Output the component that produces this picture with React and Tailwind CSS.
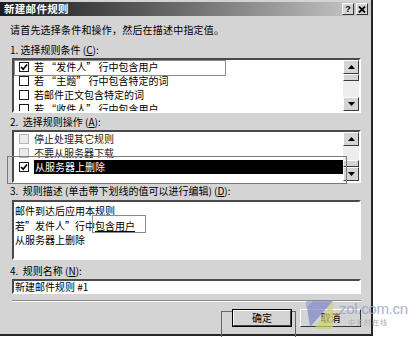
import React from 'react';

const Check = ({ checked, disabled }) => (
  <span
    className={`shrink-0 w-[10px] h-[10px] border flex items-center justify-center ${
      disabled ? 'border-[#b4b4b4] bg-[#ececec]' : 'border-[#1a1a1a] bg-white'
    }`}
  >
    {checked && (
      <svg viewBox="0 0 8 8" className="w-[8px] h-[8px]">
        <path d="M1 4 L3.2 6.2 L7 1.5" stroke="#000" strokeWidth="1.7" fill="none" />
      </svg>
    )}
  </span>
);

const ArrowBtn = ({ up }) => (
  <div className="h-[14px] w-full bg-[#d4d4d4] border border-t-white border-l-white border-b-[#3a3a3a] border-r-[#3a3a3a] flex items-center justify-center">
    <svg viewBox="0 0 7 4" className="w-[7px] h-[4px]">
      <path d={up ? 'M0 4 L3.5 0 L7 4 Z' : 'M0 0 L3.5 4 L7 0 Z'} fill="#000" />
    </svg>
  </div>
);

const Scrollbar = ({ thumbTop }) => (
  <div className="w-[16px] h-full flex flex-col bg-[#ededed]">
    <ArrowBtn up />
    <div className="flex-1 relative">
      <div
        className={`absolute left-0 w-full h-[7px] bg-[#d4d4d4] border border-t-white border-l-white border-b-[#3a3a3a] border-r-[#3a3a3a] ${
          thumbTop ? 'top-0' : 'bottom-0'
        }`}
      />
    </div>
    <ArrowBtn />
  </div>
);

const Row = ({ checked, disabled, selected, children }) => (
  <div className="h-[14px] flex items-center pl-[5px] gap-[5px] whitespace-nowrap">
    <Check checked={checked} disabled={disabled} />
    <span className={`leading-[14px] ${selected ? 'flex-1 bg-black text-white pl-[1px]' : ''}`}>{children}</span>
  </div>
);

const sunken = 'border-2 border-t-[#4a4a4a] border-l-[#4a4a4a] border-b-white border-r-white';

export default function App() {
  return (
    <div className="w-[416px] h-[337px] bg-white relative overflow-hidden font-['Noto_Sans_CJK_SC',sans-serif] text-[10px] text-black">
      <div className="w-[373px] h-[336px] bg-[#d4d4d4] border-r-2 border-b-2 border-r-[#262626] border-b-[#262626] flex flex-col">
        {/* title bar */}
        <div className="mt-[2px] h-[14px] bg-gradient-to-r from-[#1c1c1c] via-[#6e6e6e] to-[#cdcdcd] flex items-center pl-[4px] pr-[3px]">
          <span className="text-white font-bold text-[10.5px] leading-[14px] tracking-[0.3px]">新建邮件规则</span>
          <div className="ml-auto flex gap-[2px]">
            <div className="w-[12px] h-[12px] bg-[#d4d4d4] border border-t-white border-l-white border-b-[#333] border-r-[#333] flex items-center justify-center text-[9px] font-bold leading-none font-['Liberation_Sans',sans-serif]">?</div>
            <div className="w-[12px] h-[12px] bg-[#d4d4d4] border border-t-white border-l-white border-b-[#333] border-r-[#333] flex items-center justify-center">
              <svg viewBox="0 0 8 7" className="w-[8px] h-[7px]">
                <path d="M1 0.5 L7 6.5 M7 0.5 L1 6.5" stroke="#000" strokeWidth="1.8" />
              </svg>
            </div>
          </div>
        </div>

        <div className="px-[10px] flex flex-col">
          <div className="mt-[7px] h-[14px] leading-[14px] tracking-[0.2px]">请首先选择条件和操作，然后在描述中指定值。</div>

          <div className="mt-[6px] h-[14px] leading-[14px]">
            1. 选择规则条件 (<span className="underline">C</span>):
          </div>
          <div className={`mt-[1px] ml-[2px] h-[55px] bg-white ${sunken} flex relative`}>
            <div className="flex-1 overflow-hidden relative">
              <Row checked>若 “发件人” 行中包含用户</Row>
              <Row>若 “主题” 行中包含特定的词</Row>
              <Row>若邮件正文包含特定的词</Row>
              <Row>若 “收件人” 行中包含用户</Row>
              <div className="absolute left-0 top-0 w-[212px] h-[16px] border border-[#8a8a8a]" />
            </div>
            <Scrollbar thumbTop />
          </div>

          <div className="mt-[2px] h-[14px] leading-[14px]">
            2.&nbsp;&nbsp;选择规则操作 (<span className="underline">A</span>):
          </div>
          <div className={`mt-[1px] ml-[2px] h-[53px] bg-white ${sunken} flex relative`}>
            <div className="flex-1 overflow-hidden">
              <Row disabled>
                <span className="text-[#222]">停止处理其它规则</span>
              </Row>
              <Row disabled>
                <span className="text-[#222]">不要从服务器下载</span>
              </Row>
              <Row checked selected>从服务器上删除</Row>
            </div>
            <Scrollbar />
            <div className="absolute left-[-7px] top-[24px] w-[340px] h-[28px] border border-[#7a7a7a] pointer-events-none" />
          </div>

          <div className="mt-[1px] h-[14px] leading-[14px]">
            3.&nbsp;&nbsp;规则描述 (单击带下划线的值可以进行编辑) (<span className="underline">D</span>):
          </div>
          <div className={`mt-[2px] ml-[2px] h-[60px] bg-white ${sunken} pt-[2px] pl-[1px] leading-[14.5px]`}>
            <div>邮件到达后应用本规则</div>
            <div>
              若”发件人”行中
              <span className="relative underline">
                包含用户
                <span className="absolute left-[-3px] top-[-3px] w-[54px] h-[18px] border border-[#8a8a8a]" />
              </span>
            </div>
            <div>从服务器上删除</div>
          </div>

          <div className="mt-[4px] h-[14px] leading-[14px]">
            4.&nbsp;&nbsp;规则名称 (<span className="underline">N</span>):
          </div>
          <div className={`mt-[1px] ml-[2px] h-[15px] bg-white ${sunken} pl-[1px] leading-[11px] flex items-center`}>
            新建邮件规则 #1
          </div>

          <div className="mt-[6px] ml-[2px] h-[2px] border-t border-t-[#8a8a8a] border-b border-b-white" />

          <div className="mt-[7px] flex justify-end gap-[8px] relative">
            <div className="absolute left-[211px] top-[2px] w-[75px] h-[30px] border border-b-0 border-[#666]" />
            <div className="relative w-[60px] h-[18px] border border-black">
              <div className="w-full h-full bg-[#d4d4d4] border border-t-white border-l-white border-b-[#444] border-r-[#444] flex items-center justify-center leading-none">
                确定
              </div>
            </div>
            <div className="w-[61px] h-[18px] bg-[#d4d4d4] border border-t-white border-l-white border-b-[#333] border-r-[#333] flex items-center justify-center leading-none">
              取消
            </div>
          </div>
        </div>
      </div>

      {/* watermark */}
      <svg viewBox="0 0 30 30" className="absolute left-[304px] top-[300px] w-[30px] h-[30px] opacity-70 pointer-events-none">
        <polygon points="2,1 29,1 6,27" fill="#7c86c6" />
        <polygon points="29,1 29,29 10,29" fill="#c9d770" />
        <polygon points="2,1 9,1 2,8" fill="#9aa6d8" />
      </svg>
      <div className="absolute left-[339px] top-[301px] flex flex-col pointer-events-none">
        <span className="text-[15px] leading-[16px] text-[#8fa2c4] opacity-80 font-['Liberation_Sans',sans-serif] tracking-[-0.3px]">zol.com.cn</span>
        <span className="mt-[1px] ml-[9px] text-[7px] leading-[8px] text-[#b0b0b0] tracking-[1px]">中关村在线</span>
      </div>
    </div>
  );
}
